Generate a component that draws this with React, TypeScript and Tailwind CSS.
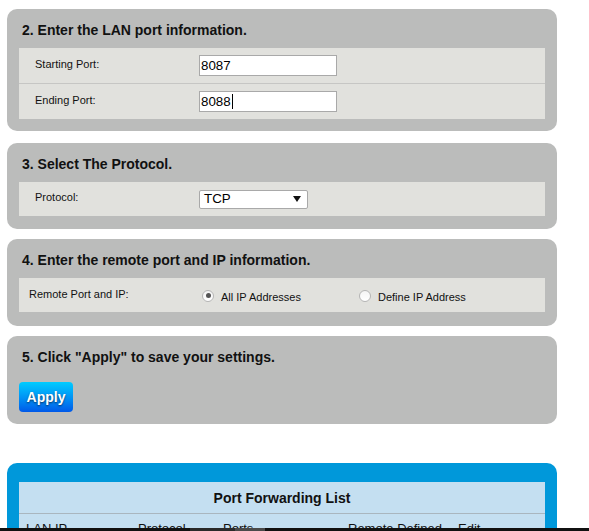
import React from "react";

const font = { fontFamily: '"Liberation Sans", Arial, sans-serif' };

function Section({
  title,
  children,
  className = "",
}: {
  title: string;
  children: React.ReactNode;
  className?: string;
}) {
  return (
    <div className={`w-[550px] shrink-0 rounded-[10px] bg-[#bbbcbb] px-[12px] pt-[11px] ${className}`}>
      <h2 className="h-[20px] pl-[3px] text-[14px] font-bold leading-[20px] text-[#111]">{title}</h2>
      {children}
    </div>
  );
}

function TextBox({ value, caret }: { value: string; caret?: boolean }) {
  return (
    <div className="flex h-[21px] w-[138px] items-center border border-[#a9a9a9] bg-white pl-[1px] text-[13.33px] text-black">
      <span>{value}</span>
      {caret && <span className="ml-[1px] h-[15px] w-[1px] bg-black" />}
    </div>
  );
}

function Radio({ checked, label }: { checked?: boolean; label: string }) {
  return (
    <div className="flex items-center">
      <span className="mt-[-4px] flex h-[12px] w-[12px] items-center justify-center rounded-full border border-[#b5b5b5] bg-gradient-to-b from-[#f4f4f4] to-white">
        {checked && <span className="h-[5px] w-[5px] rounded-full bg-[#555]" />}
      </span>
      <span className="ml-[7px] text-[11px] text-[#111]">{label}</span>
    </div>
  );
}

export default function App() {
  return (
    <div style={font} className="flex h-[531px] flex-col overflow-hidden bg-white">
      <div className="flex flex-1 flex-col overflow-hidden pl-[7px] pt-[9px]">
        {/* Step 2: LAN ports */}
        <Section title="2. Enter the LAN port information." className="pb-[12px]">
          <div className="mt-[8px] bg-[#e1e1dd]">
            <div className="flex h-[36px] items-center border-b border-[#c6c6c4]">
              <span className="mt-[-3px] w-[180px] pl-[16px] text-[11px] text-[#111]">Starting Port:</span>
              <TextBox value="8087" />
            </div>
            <div className="flex h-[35px] items-center">
              <span className="mt-[-3px] w-[180px] pl-[16px] text-[11px] text-[#111]">Ending Port:</span>
              <TextBox value="8088" caret />
            </div>
          </div>
        </Section>

        {/* Step 3: protocol */}
        <Section title="3. Select The Protocol." className="mt-[12px] pb-[13px]">
          <div className="mt-[8px] flex h-[34px] items-center bg-[#e1e1dd]">
            <span className="mt-[-4px] w-[180px] pl-[16px] text-[11px] text-[#111]">Protocol:</span>
            <div className="flex h-[19px] w-[109px] items-center justify-between rounded-[2px] border border-[#a9a9a9] bg-white pl-[4px] pr-[6px] text-[13.33px] text-black">
              <span>TCP</span>
              <svg width="8" height="6" viewBox="0 0 8 6">
                <path d="M0 0 H8 L4 6 Z" fill="#111" />
              </svg>
            </div>
          </div>
        </Section>

        {/* Step 4: remote port / IP */}
        <Section title="4. Enter the remote port and IP information." className="mt-[10px] pb-[14px]">
          <div className="mt-[8px] flex h-[34px] items-center bg-[#e1e1dd]">
            <span className="mt-[-1px] w-[183px] pl-[10px] text-[11px] text-[#111]">Remote Port and IP:</span>
            <div className="mt-[5px] flex items-center">
              <div className="w-[157px]">
                <Radio checked label="All IP Addresses" />
              </div>
              <Radio label="Define IP Address" />
            </div>
          </div>
        </Section>

        {/* Step 5: apply */}
        <Section title={'5. Click "Apply" to save your settings.'} className="mt-[10px] pb-[12px]">
          <button className="mt-[15px] h-[30px] w-[54px] rounded-[4px] bg-gradient-to-b from-[#00ccff] to-[#0058e8] text-[14px] font-bold text-white [text-shadow:0_1px_2px_rgba(0,0,0,0.6)]">
            Apply
          </button>
        </Section>

        {/* Port forwarding list */}
        <div className="mt-[39px] w-[550px] shrink-0 rounded-t-[10px] bg-[#0098da] px-[12px] pt-[19px]">
          <div className="bg-[#c4dff1]">
            <div className="flex h-[32px] items-center justify-center border-b border-[#a9b6bf] pt-[2px] text-[14px] font-bold text-[#111]">
              Port Forwarding List
            </div>
            <div className="grid h-[40px] grid-cols-[112px_85px_125px_110px_1fr] pl-[7px] pt-[7px] text-[13px] leading-[15px] text-[#111]">
              <span>LAN IP</span>
              <span>Protocol</span>
              <span>Ports</span>
              <span>Remote Defined</span>
              <span>Edit</span>
            </div>
          </div>
        </div>
      </div>
      {/* dark strip along the bottom edge */}
      <div className="flex h-[3px] shrink-0 bg-[#111]">
        <span className="ml-[190px] w-[45px] bg-[#2a2a2a]" />
        <span className="w-[30px] bg-[#4a4a4a]" />
      </div>
    </div>
  );
}
